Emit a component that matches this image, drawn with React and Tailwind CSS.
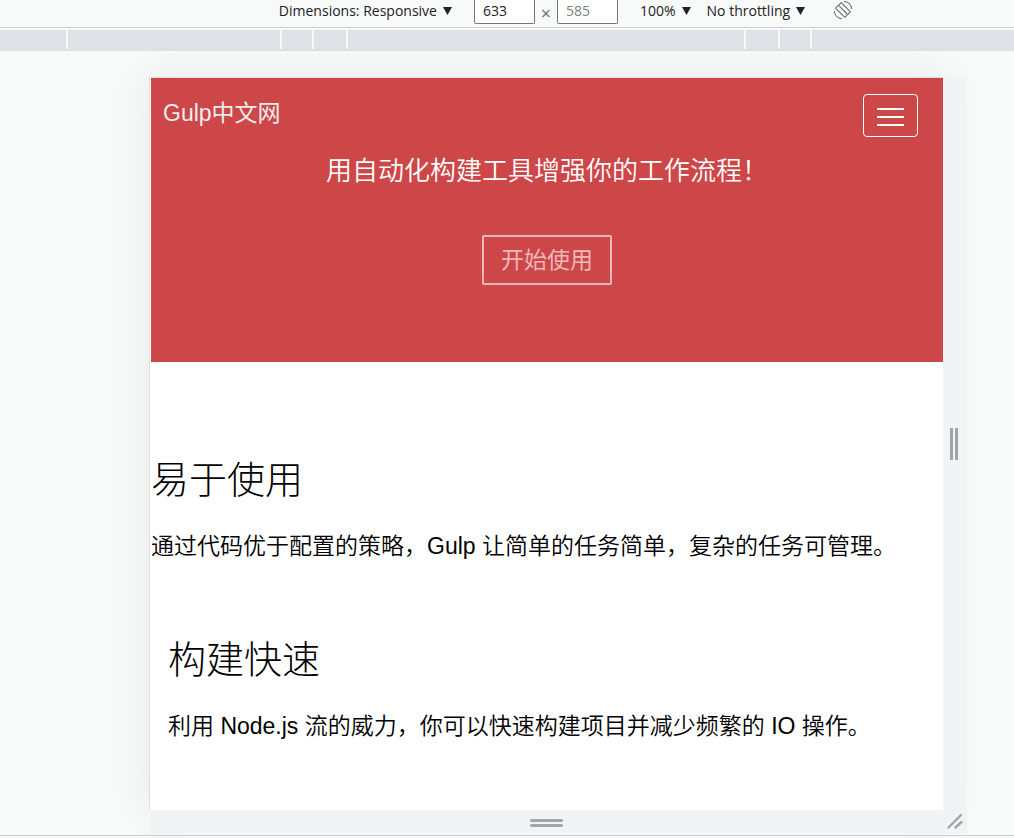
import { useState } from 'react';

const FEATURES = [
    {
        title: '易于使用',
        text: '通过代码优于配置的策略，Gulp 让简单的任务简单，复杂的任务可管理。',
        className: 'pl-px',
    },
    {
        title: '构建快速',
        text: '利用 Node.js 流的威力，你可以快速构建项目并减少频繁的 IO 操作。',
        className: 'pl-[18px]',
    },
];

function RotateIcon() {
    return (
        <svg width="20" height="20" viewBox="0 0 20 20" fill="none" stroke="#6e6e6e" strokeWidth="1.1">
            <path d="M8.2 2.6 L17.4 11.8 L11.8 17.4 L2.6 8.2 Z" strokeLinejoin="round" />
            <path d="M5.8 5.6 L14.2 14" />
            <path d="M11 1.2 A8.9 8.9 0 0 1 18.8 9" />
            <path d="M9 18.8 A8.9 8.9 0 0 1 1.2 11" />
        </svg>
    );
}

function Caret() {
    return (
        <svg width="9" height="8" viewBox="0 0 9 8" fill="#202124">
            <path d="M0 0 H9 L4.5 8 Z" />
        </svg>
    );
}

function Toolbar() {
    const [width, setWidth] = useState('633');

    return (
        <header className="flex h-7 items-start justify-center border-b border-[#c9cdd0] pl-[118px] text-[14px] leading-[22px] text-[#202124]">
            <button type="button" className="flex items-center gap-1.5 whitespace-nowrap">
                Dimensions: Responsive <Caret />
            </button>
            <input
                aria-label="Width"
                value={width}
                onChange={(e) => setWidth(e.target.value)}
                className="ml-[22px] h-6 w-[61px] rounded-b-xs border border-t-0 border-[#757575] bg-white pb-0.5 pl-2 text-[14px] text-[#202124]"
            />
            <span className="w-[22px] pt-0.5 text-center text-[18px] text-[#6e6e6e]">×</span>
            <input
                aria-label="Height"
                placeholder="585"
                className="h-6 w-[61px] rounded-b-xs border border-t-0 border-[#757575] bg-white pb-0.5 pl-2 text-[14px] placeholder:text-[#808080]"
            />
            <button type="button" className="ml-[22px] flex items-center gap-1.5">
                100% <Caret />
            </button>
            <button type="button" className="ml-4 flex items-center gap-1.5 whitespace-nowrap">
                No throttling <Caret />
            </button>
            <button type="button" aria-label="Rotate" className="ml-7">
                <RotateIcon />
            </button>
        </header>
    );
}

function Ruler() {
    return (
        <div className="mt-0.5 h-[21px] bg-[#dee1e6]">
            <div className="grid h-[19px] grid-cols-[68fr_214fr_32fr_34fr_398fr_34fr_32fr_202fr]">
                {[0, 1, 2, 3, 4, 5, 6, 7].map((i) => (
                    <div key={i} className="border-r-2 border-[#f8faf9] last:border-r-0" />
                ))}
            </div>
        </div>
    );
}

function Hero() {
    return (
        <section className="bg-[#cd4648] pb-[77px] text-white">
            <nav className="flex items-start justify-between pt-4 pr-[25px] pl-3">
                <a href="#" className="pt-[3px] text-[23px] leading-8 text-[#eeeeee]">Gulp中文网</a>
                <button
                    type="button"
                    aria-label="Menu"
                    className="flex h-[43px] w-[55px] flex-col items-center justify-center gap-1.5 rounded-sm border border-white pt-0.5"
                >
                    <span className="h-0.5 w-[27px] bg-white" />
                    <span className="h-0.5 w-[27px] bg-white" />
                    <span className="h-0.5 w-[27px] bg-white" />
                </button>
            </nav>
            <p className="mt-3 pt-px text-center text-[26px] leading-[42px] font-[350]">用自动化构建工具增强你的工作流程！</p>
            <div className="mt-[43px] flex justify-center">
                <a
                    href="#"
                    className="flex h-[50px] w-[130px] items-center justify-center rounded-xs border-2 border-[#eeb8b9] text-[23px] text-[#eeb8b9]"
                >
                    开始使用
                </a>
            </div>
        </section>
    );
}

export default function App() {
    return (
        <div className="overflow-hidden bg-[#f8faf9] font-['Open_Sans','Noto_Sans_CJK_SC',sans-serif]">
            <Toolbar />
            <Ruler />
            <main className="mt-[26px] mr-[47px] ml-[149px] grid grid-cols-[1fr_24px] font-['Liberation_Sans','Noto_Sans_CJK_SC',sans-serif]">
                <div className="border-t border-l border-[#dcdfdf] bg-white pb-[62px] text-black shadow-[0_0_40px_rgba(0,0,0,0.07)]">
                    <div className="pl-px">
                        <Hero />
                    </div>
                    <div className="flex flex-col gap-16 pt-[90px]">
                        {FEATURES.map((f) => (
                            <section key={f.title} className={f.className}>
                                <h2 className="text-[38px] leading-[56px] font-light">{f.title}</h2>
                                <p className="mt-4 text-[23px] leading-[44px] font-[350]">{f.text}</p>
                            </section>
                        ))}
                    </div>
                </div>
                <div className="z-10 flex items-center justify-center gap-0.5 bg-[#f1f3f4] pr-[3px]">
                    <span className="h-8 w-[3px] bg-[#a3a5a5]" />
                    <span className="h-8 w-[3px] bg-[#a3a5a5]" />
                </div>
                <div className="z-10 ml-px flex h-6 flex-col items-center justify-center gap-0.5 bg-[#f1f3f4] pt-0.5">
                    <span className="h-[3px] w-[33px] rounded-full bg-[#a3a5a5]" />
                    <span className="h-[3px] w-[33px] rounded-full bg-[#a3a5a5]" />
                </div>
                <div className="z-10 h-6 bg-[#f1f3f4]">
                    <svg width="24" height="24" viewBox="0 0 24 24" stroke="#a3a5a5" strokeWidth="2.4" strokeLinecap="round">
                        <path d="M5.5 17.5 L18 5 M12.5 17.5 L18.5 12" />
                    </svg>
                </div>
            </main>
            <footer className="mt-px h-[3px] border-t border-[#c9cdd0]" />
        </div>
    );
}
